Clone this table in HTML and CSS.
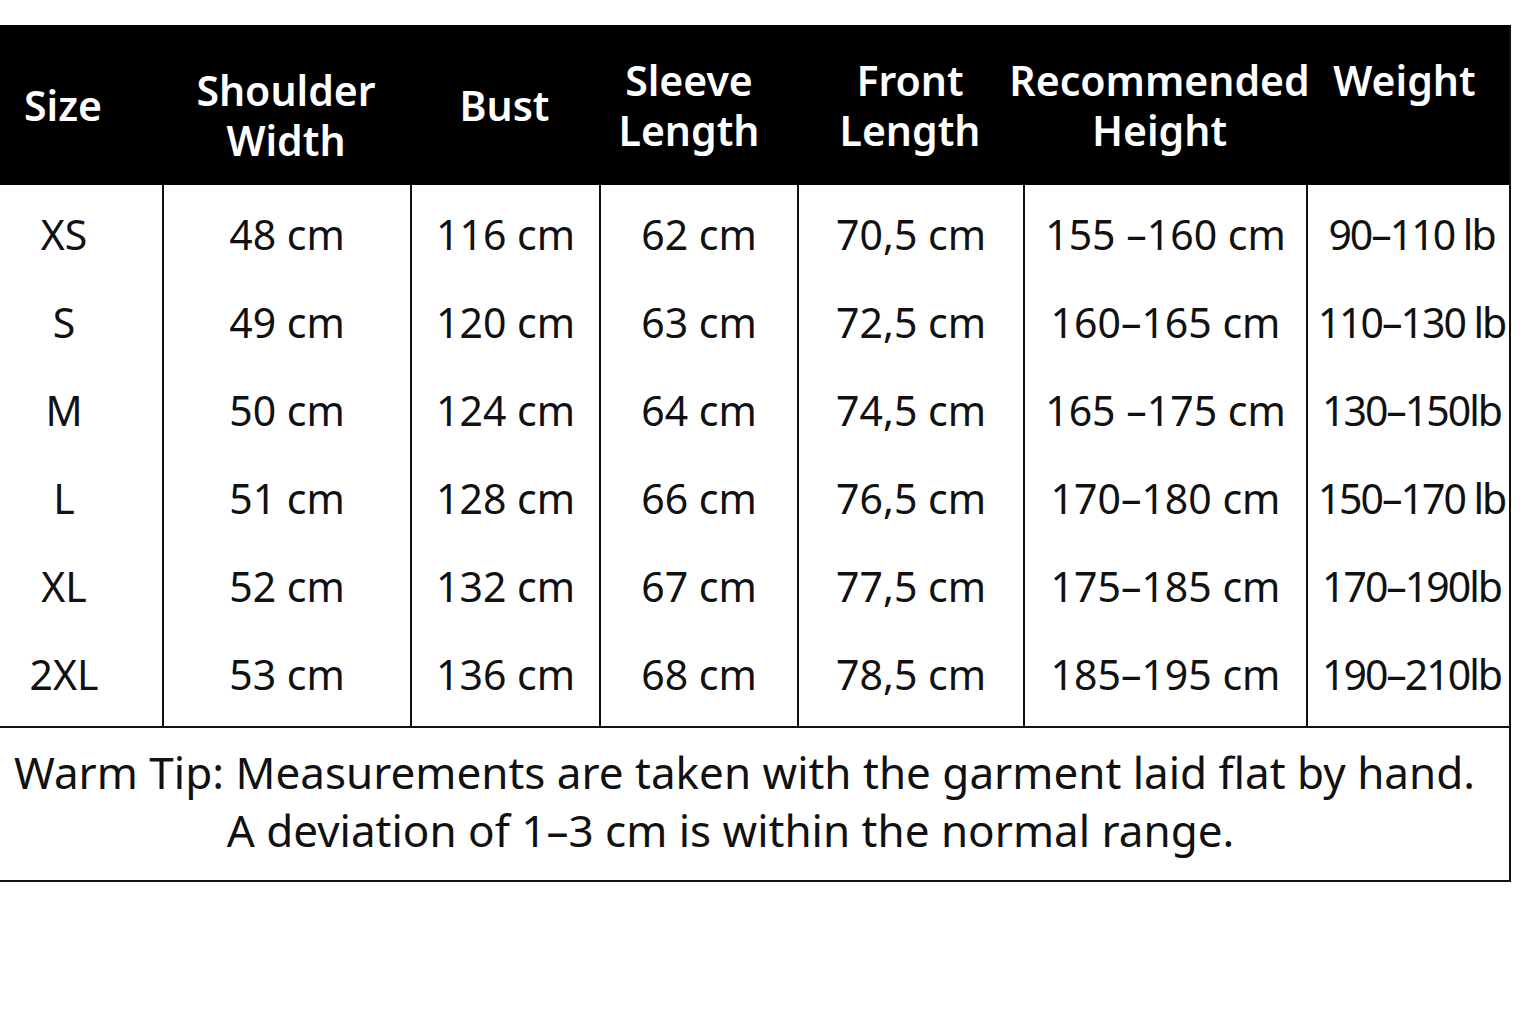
FILE: index.html
```html
<!DOCTYPE html>
<html lang="en">
<head>
<meta charset="utf-8">
<title>Size Chart</title>
<link rel="stylesheet" href="styles.css">
</head>
<body>
<div class="chart">
  <div class="head">
    <div class="hc hc-size">Size</div>
    <div class="hc hc-shoulder">Shoulder<br>Width</div>
    <div class="hc hc-bust">Bust</div>
    <div class="hc hc-sleeve">Sleeve<br>Length</div>
    <div class="hc hc-front">Front<br>Length</div>
    <div class="hc hc-height">Recommended<br>Height</div>
    <div class="hc hc-weight">Weight</div>
  </div>
  <div class="body">
    <div class="row">
      <div class="c c-size">XS</div><div class="c">48 cm</div><div class="c">116 cm</div><div class="c">62 cm</div><div class="c">70,5 cm</div><div class="c">155 –160 cm</div><div class="c c-weight">90–110 lb</div>
    </div>
    <div class="row">
      <div class="c c-size">S</div><div class="c">49 cm</div><div class="c">120 cm</div><div class="c">63 cm</div><div class="c">72,5 cm</div><div class="c">160–165 cm</div><div class="c c-weight">110–130 lb</div>
    </div>
    <div class="row">
      <div class="c c-size">M</div><div class="c">50 cm</div><div class="c">124 cm</div><div class="c">64 cm</div><div class="c">74,5 cm</div><div class="c">165 –175 cm</div><div class="c c-weight">130–150lb</div>
    </div>
    <div class="row">
      <div class="c c-size">L</div><div class="c">51 cm</div><div class="c">128 cm</div><div class="c">66 cm</div><div class="c">76,5 cm</div><div class="c">170–180 cm</div><div class="c c-weight">150–170 lb</div>
    </div>
    <div class="row">
      <div class="c c-size">XL</div><div class="c">52 cm</div><div class="c">132 cm</div><div class="c">67 cm</div><div class="c">77,5 cm</div><div class="c">175–185 cm</div><div class="c c-weight">170–190lb</div>
    </div>
    <div class="row">
      <div class="c c-size">2XL</div><div class="c">53 cm</div><div class="c">136 cm</div><div class="c">68 cm</div><div class="c">78,5 cm</div><div class="c">185–195 cm</div><div class="c c-weight">190–210lb</div>
    </div>
  </div>
  <div class="tip">
    <div class="tip-1">Warm Tip: Measurements are taken with the garment laid flat by hand.</div>
    <div class="tip-2">A deviation of 1–3 cm is within the normal range.</div>
  </div>
</div>
</body>
</html>
```
FILE: styles.css
```css
html, body {
  margin: 0;
  padding: 0;
  background: #fff;
}
body {
  font-family: "Noto Sans", "Open Sans", sans-serif;
  color: #111;
}
.chart {
  width: 1511px;
  margin-top: 25px;
  border-right: 2px solid #111;
  box-sizing: border-box;
}
.head,
.row {
  display: grid;
  grid-template-columns: 162px 248px 189px 198px 226px 283px 203px;
}
.head {
  height: 160px;
  background: #000;
  color: #fff;
  font-size: 41px;
  font-weight: 600;
  line-height: 50px;
}
.hc {
  display: flex;
  justify-content: center;
  text-align: center;
  white-space: nowrap;
  padding-top: 30px;
  box-sizing: border-box;
}
.hc-size {
  padding-top: 55px;
  padding-right: 36px;
}
.hc-bust { padding-top: 55px; }
.hc-shoulder { padding-top: 40px; }
.hc-sleeve { padding-right: 18px; }
.hc-height { padding-right: 10px; }
.hc-weight { padding-right: 6px; }

.body {
  border-bottom: 2px solid #111;
}
.row {
  height: 88px;
  font-size: 41px;
  line-height: 1;
}
.row:first-child { height: 93px; }
.row:first-child .c { padding-top: 5px; }
.row:last-child { height: 96px; }
.row:last-child .c { padding-bottom: 8px; }
.c {
  display: flex;
  align-items: center;
  justify-content: center;
  white-space: nowrap;
  border-left: 2px solid #111;
  box-sizing: border-box;
}
.c-size {
  border-left: none;
  padding-right: 34px;
}
.c-weight {
  letter-spacing: -2px;
  padding-left: 6px;
}
.tip {
  height: 154px;
  border-bottom: 2px solid #111;
  box-sizing: border-box;
  padding-top: 15px;
  font-size: 44px;
  line-height: 58px;
  text-align: center;
}
.tip-1 { padding-right: 20px; }
.tip-2 { padding-right: 48px; }
```
